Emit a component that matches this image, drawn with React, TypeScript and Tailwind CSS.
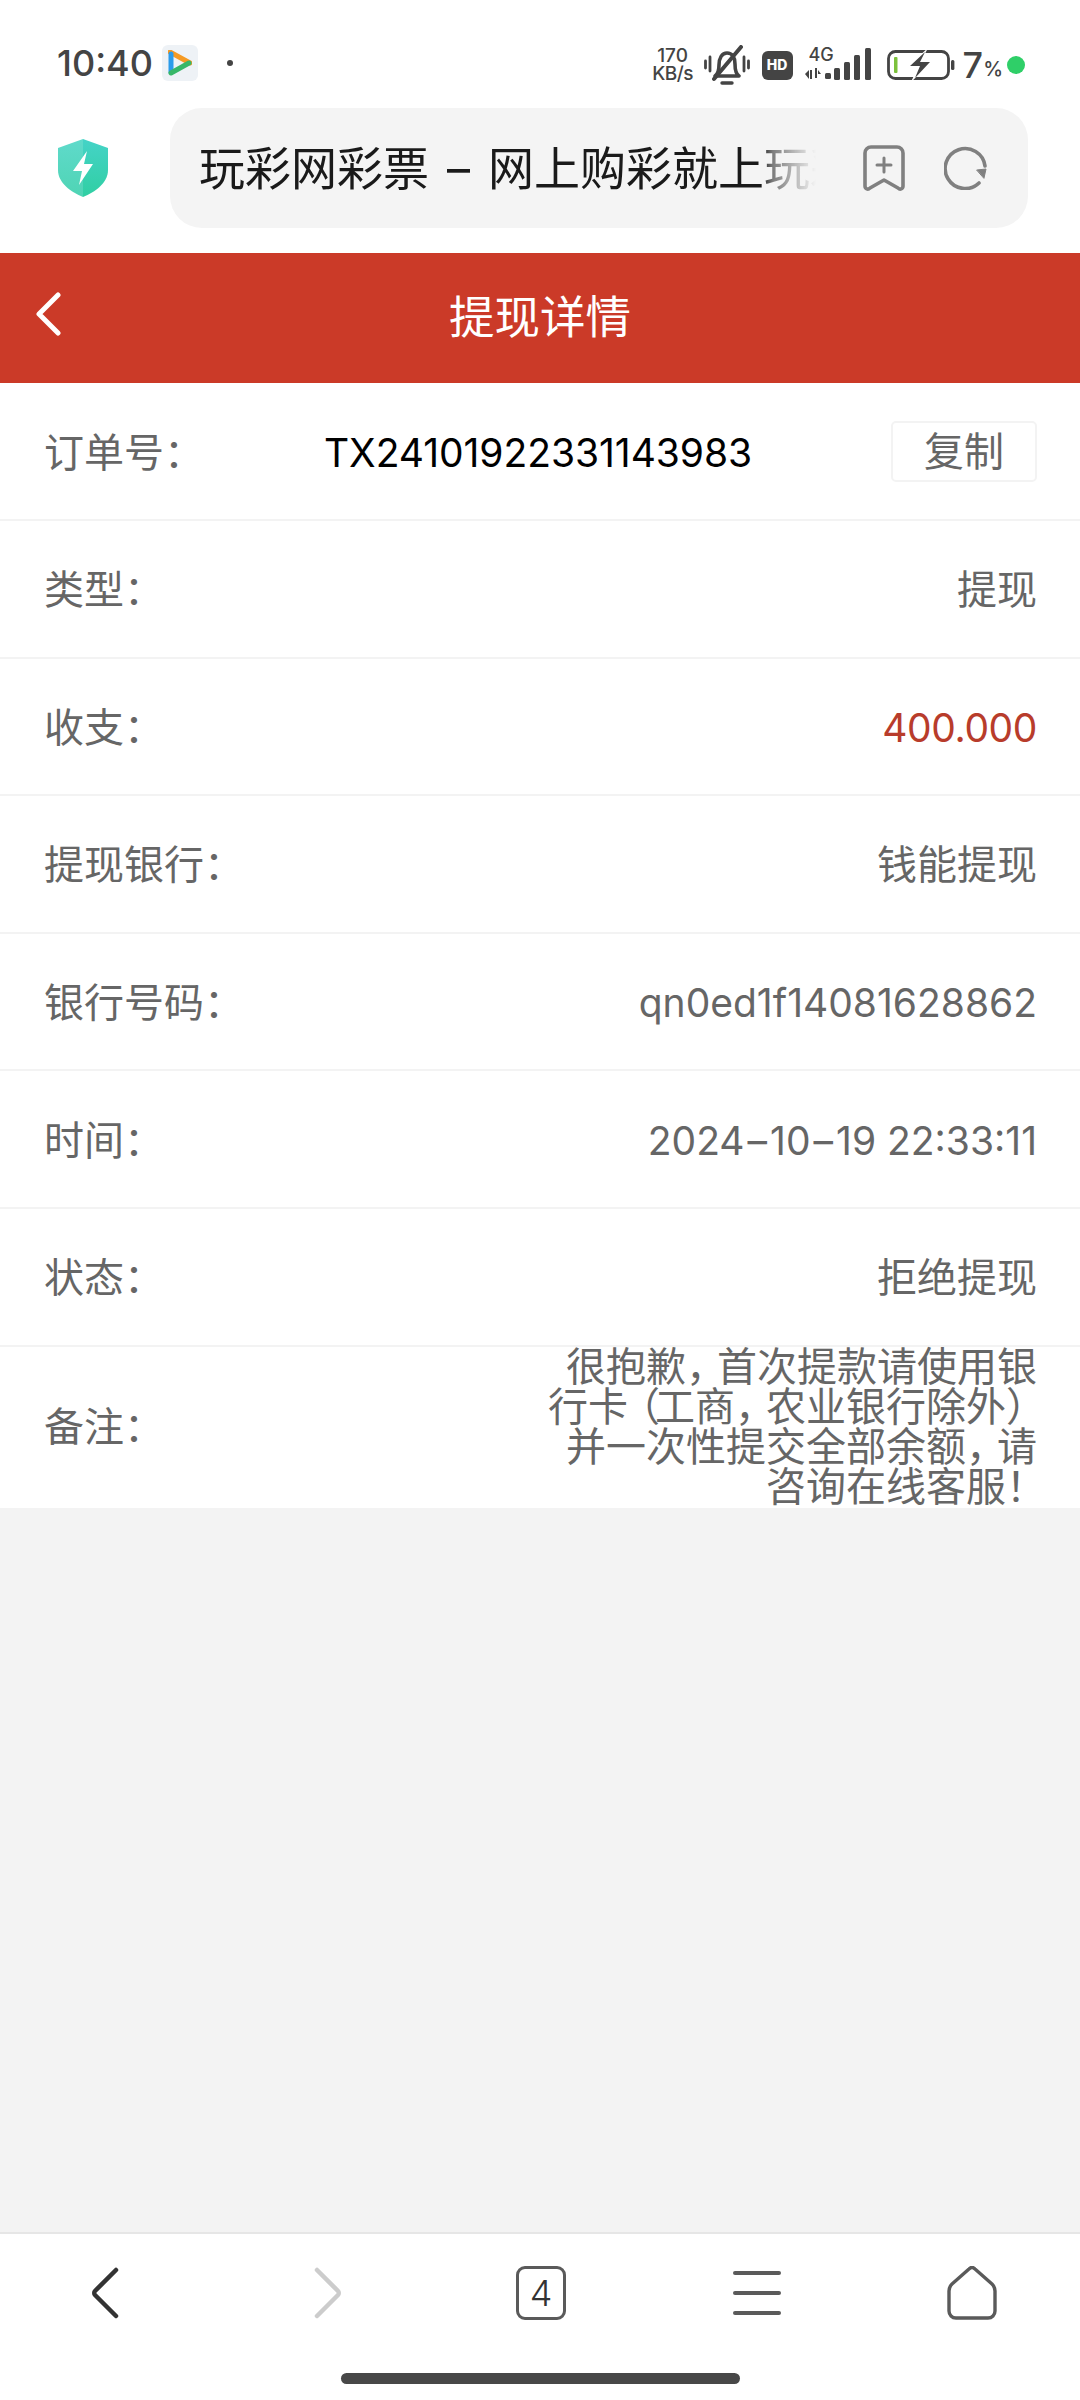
import React from "react";

const FONT = "font-['Inter','Noto_Sans_CJK_SC',sans-serif]";

function Row({ label, value, valueClass = "text-[#666666] text-[40px]" }: { label: string; value: React.ReactNode; valueClass?: string }) {
  return (
    <div className="flex h-[137.6px] items-center justify-between border-b-2 border-[#f3f3f3] pl-[44px] pr-[43px] pt-[3px] leading-[40px]">
      <span className="text-[40px] text-[#666666]">{label}</span>
      <span className={valueClass}>{value}</span>
    </div>
  );
}

function StatusIcons() {
  return (
    <div className="flex items-center">
      <div className="flex w-[42px] flex-col items-center text-[19px] font-medium leading-[18px] text-[#444444]">
        <span>170</span>
        <span className="whitespace-nowrap tracking-[-0.5px]">KB/s</span>
      </div>
      <svg className="ml-[10px]" width="46" height="40" viewBox="0 0 46 40" fill="none" stroke="#444444" strokeWidth="3.6" strokeLinecap="round" strokeLinejoin="round">
        <path d="M11 31c3-2 4-6 4-11 0-7 3-12 8-12s8 4 8 11c0 6 1 10 4 12z" />
        <path d="M18 38h10" strokeWidth="3.4" />
        <path d="M37 2 10 34" strokeWidth="4" />
        <path d="M1.5 16v7M6 12v14M40 12v14M44.500 16v7" strokeWidth="2.8" />
      </svg>
      <div className="ml-[12px] flex h-[29px] w-[31px] items-center justify-center rounded-[6px] bg-[#444444] text-[14px] font-extrabold leading-none text-white">
        HD
      </div>
      <div className="relative ml-[12px] h-[36px] w-[68px]">
        <span className="absolute left-[4px] top-[-2px] text-[18px] font-medium leading-[20px] text-[#444444]">4G</span>
        <svg className="absolute left-0 top-0" width="68" height="36" viewBox="0 0 68 36" fill="#444444">
          <path d="M0 27l4-4v9zM5 23h2v9H5zM10 21h2v10h-2zM13 23l3 4h-3z" />
          <rect x="20" y="26" width="6" height="6" rx="1.5" />
          <rect x="29" y="21" width="6" height="12" rx="1.5" />
          <rect x="39" y="15" width="6" height="18" rx="1.5" />
          <rect x="49" y="8" width="6" height="25" rx="1.5" />
          <rect x="60" y="1" width="6" height="32" rx="1.5" />
        </svg>
      </div>
      <svg className="ml-[14px]" width="68" height="34" viewBox="0 0 68 34" fill="none">
        <rect x="1.500" y="3.500" width="60" height="27" rx="7" stroke="#444444" strokeWidth="2.8" />
        <rect x="7" y="9" width="3.500" height="16" rx="1" fill="#7cc13c" />
        <path d="M41 0 20 19h11l-7 15 22-21H34z" fill="#ffffff" />
        <path d="M38 4 23 18h10l-5 12 15-16H33z" fill="#444444" />
        <rect x="64" y="12" width="3.400" height="10" rx="1.500" fill="#444444" />
      </svg>
      <span className="ml-[8px] text-[36px] font-medium leading-none text-[#444444]">7</span>
      <span className="mt-[8px] text-[20px] font-medium leading-none text-[#444444]">%</span>
      <span className="ml-[4px] h-[18px] w-[18px] rounded-full bg-[#2fcf68]" />
    </div>
  );
}

export default function App() {
  return (
    <div className={`flex h-[2400px] w-[1080px] flex-col overflow-hidden bg-[#f3f3f3] ${FONT}`}>
      <div className="flex h-[253px] flex-col bg-white">
        <div className="flex h-[108px] items-start justify-between pl-[57px] pr-[55px] pt-[45px]">
          <div className="flex items-center">
            <span className="text-[36px] font-medium leading-[36px] text-[#444444]">10:40</span>
            <div className="ml-[9px] flex h-[36px] w-[36px] items-center justify-center rounded-[6px] bg-[#eef2f6]">
              <svg width="24" height="26" viewBox="0 0 24 26" fill="none">
                <path d="M2 2 22 13" stroke="#f59a23" strokeWidth="5" strokeLinecap="round" />
                <path d="M3 4v18" stroke="#2b9bea" strokeWidth="5" strokeLinecap="round" />
                <path d="M3 23 21 13" stroke="#37b768" strokeWidth="5" strokeLinecap="round" />
              </svg>
            </div>
            <span className="ml-[29px] h-[6px] w-[6px] rounded-full bg-[#444444]" />
          </div>
          <StatusIcons />
        </div>
        <div className="flex items-center pl-[58px]">
          <svg width="50" height="58" viewBox="0 0 50 58">
            <defs>
              <linearGradient id="sh" x1="0" y1="0" x2="0" y2="1">
                <stop offset="0" stopColor="#5fdacb" />
                <stop offset="1" stopColor="#4fd4b4" />
              </linearGradient>
              <linearGradient id="sh2" x1="0" y1="0" x2="0" y2="1">
                <stop offset="0" stopColor="#45d3c7" />
                <stop offset="1" stopColor="#30cfa3" />
              </linearGradient>
            </defs>
            <path d="M25 0 0 9v22c0 13 13 22 25 27z" fill="url(#sh)" />
            <path d="M25 0l25 9v22c0 13-13 22-25 27z" fill="url(#sh2)" />
            <path d="M29 12 15 32h9l-3 14 14-21h-9z" fill="#ffffff" />
          </svg>
          <div className="ml-[62px] flex h-[120px] w-[858px] items-center rounded-[32px] bg-[#f4f4f4] pl-[29px]">
            <div className="w-[617px] shrink-0 overflow-hidden whitespace-nowrap text-[46px] leading-[60px] text-[#1a1a1a] [mask-image:linear-gradient(to_right,black_91%,rgba(0,0,0,0.55)_93%,transparent_100%)]">
              玩彩网彩票 <span className="mx-[5px]">–</span> 网上购彩就上玩彩网彩票
            </div>
            <svg className="ml-[47px] shrink-0" width="42" height="46" viewBox="0 0 42 46" fill="none" stroke="#808080" strokeWidth="3.6" strokeLinecap="round" strokeLinejoin="round">
              <path d="M8 2h26a6 6 0 0 1 6 6v33c0 3-3 4-5 2l-14-8-14 8c-2 2-5 1-5-2V8a6 6 0 0 1 6-6z" />
              <path d="M21 13v14M14 20h14" strokeWidth="3" />
            </svg>
            <svg className="ml-[39px] shrink-0" width="44" height="44" viewBox="0 0 44 44" fill="none" stroke="#808080" strokeWidth="3.6" strokeLinecap="round">
              <path d="M35 37a20 20 0 1 1 6-17" />
              <path d="M33 24l9-1-2 9z" fill="#808080" strokeWidth="1" strokeLinejoin="round" />
            </svg>
          </div>
        </div>
      </div>

      <div className="relative flex h-[130px] items-center justify-center bg-[#cb3a28]">
        <svg className="absolute left-[34px] top-[39px]" width="28" height="44" viewBox="0 0 28 44" fill="none" stroke="#ffffff" strokeWidth="5" strokeLinecap="round" strokeLinejoin="round">
          <path d="M24 3 5 22l19 19" />
        </svg>
        <span className="text-[45.5px] leading-[60px] text-white">提现详情</span>
      </div>

      <div className="bg-white">
        <div className="flex h-[138px] items-center border-b-2 border-[#f3f3f3] pl-[44px] pr-[43px] pt-[1px] leading-[40px]">
          <span className="w-[280px] pt-[2px] text-[40px] text-[#666666]">订单号：</span>
          <span className="pt-[2px] text-[39px] tracking-[-0.05px] text-black">TX24101922331143983</span>
          <button className="ml-auto flex h-[61px] w-[146px] items-center justify-center rounded-[5px] border-2 border-[#f3f3f3] text-[40px] text-[#666666]">
            复制
          </button>
        </div>
        <Row label="类型：" value="提现" />
        <Row label="收支：" value="400.000" valueClass="text-[#b83c2b] text-[39px] tracking-[-0.4px]" />
        <Row label="提现银行：" value="钱能提现" />
        <Row label="银行号码：" value="qn0ed1f14081628862" valueClass="text-[#666666] text-[39px]" />
        <Row
          label="时间："
          value={<>2024<span className="mx-[3px]">–</span>10<span className="mx-[3px]">–</span>19 22:33:11</>}
          valueClass="text-[#666666] text-[39px]"
        />
        <Row label="状态：" value="拒绝提现" />
        <div className="flex h-[161px] items-center justify-between pl-[44px] pr-[43px] text-[40px] leading-[40px] text-[#666666]">
          <span>备注：</span>
          <div className="text-right">
            <div>很抱歉<span className="tracking-[-9px]">，</span>首次提款请使用银</div>
            <div>行卡<span className="-ml-[8px] tracking-[-5px]">（</span>工商<span className="tracking-[-9px]">，</span>农业银行除外<span className="tracking-[-9px]">）</span></div>
            <div>并一次性提交全部余额<span className="tracking-[-9px]">，</span>请</div>
            <div>咨询在线客服<span className="tracking-[-9px]">！</span></div>
          </div>
        </div>
      </div>

      <div className="flex-1" />

      <div className="flex h-[168px] flex-col border-t-2 border-[#e6e6e6] bg-white">
        <div className="flex h-[118px] items-center">
          <div className="flex w-[210px] justify-center">
            <svg width="28" height="52" viewBox="0 0 28 52" fill="none" stroke="#333333" strokeWidth="4.500" strokeLinecap="round" strokeLinejoin="round">
              <path d="M25 3 4 24c-1 1-1 3 0 4l21 21" />
            </svg>
          </div>
          <div className="flex w-[236px] justify-center">
            <svg width="28" height="52" viewBox="0 0 28 52" fill="none" stroke="#cccccc" strokeWidth="4.500" strokeLinecap="round" strokeLinejoin="round">
              <path d="M3 3l21 21c1 1 1 3 0 4L3 49" />
            </svg>
          </div>
          <div className="flex w-[190px] justify-center">
            <div className="flex h-[54px] w-[50px] items-center justify-center rounded-[9px] border-[3px] border-[#5a5a5a] text-[36px] font-light leading-none text-[#333333]">
              4
            </div>
          </div>
          <div className="flex w-[242px] justify-center">
            <div className="flex h-[44px] w-[48px] flex-col justify-between">
              <div className="h-[4px] rounded-full bg-[#5a5a5a]" />
              <div className="h-[4px] rounded-full bg-[#5a5a5a]" />
              <div className="h-[4px] rounded-full bg-[#5a5a5a]" />
            </div>
          </div>
          <div className="flex w-[188px] justify-center">
            <svg width="52" height="54" viewBox="0 0 52 54" fill="none" stroke="#5a5a5a" strokeWidth="3.400" strokeLinejoin="round">
              <path d="M23 3c2-2 4-2 6 0l17 15c2 2 3 4 3 7v20c0 4-3 7-7 7H10c-4 0-7-3-7-7V25c0-3 1-5 3-7z" />
            </svg>
          </div>
        </div>
        <div className="flex justify-center pt-[21px]">
          <div className="h-[11px] w-[399px] rounded-full bg-[#484848]" />
        </div>
      </div>
    </div>
  );
}
